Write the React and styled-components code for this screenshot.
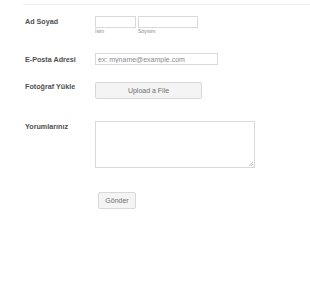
import React from 'react'
import styled, { createGlobalStyle } from 'styled-components'

const Global = createGlobalStyle`
  body {
    margin: 0;
    background: #fff;
    font-family: "Liberation Sans", Arial, sans-serif;
  }
`;

const Page = styled.div`
  padding: 4px 0 0 23px;
  height: 300px;
  box-sizing: border-box;
`;

const Form = styled.form`
  border-top: 1px solid #eeeeee;
  padding-left: 2px;
`;

const Row = styled.div`
  display: flex;
  align-items: flex-start;
  margin-top: ${(p) => p.$top}px;
`;

const Label = styled.label`
  width: 70px;
  flex-shrink: 0;
  font-size: 7.2px;
  font-weight: bold;
  line-height: 8px;
  color: #4f4f4f;
  padding-top: ${(p) => p.$pad ?? 2}px;
`;

const Field = styled.div`
  display: flex;
  flex-direction: column;
  padding-left: ${(p) => p.$indent || 0}px;
`;

const NameFields = styled.div`
  display: flex;
  gap: 2px;
`;

const NameCol = styled.div`
  display: flex;
  flex-direction: column;
`;

const TextInput = styled.input`
  box-sizing: border-box;
  width: ${(p) => p.$w}px;
  height: 12px;
  margin: 0;
  padding: 0 2px;
  border: 1px solid #d9d9d9;
  border-radius: 0;
  font-family: inherit;
  font-size: 7px;
  color: #555;
  outline: none;
  &::placeholder {
    color: #8a8a8a;
  }
`;

const SubLabel = styled.span`
  font-size: 5px;
  line-height: 7px;
  color: #8a8a8a;
`;

const Button = styled.button`
  box-sizing: border-box;
  width: ${(p) => p.$w}px;
  height: 17px;
  margin: 0;
  padding: 0;
  background: #f4f4f4;
  border: 1px solid #d8d8d8;
  border-radius: 2px;
  font-family: inherit;
  font-size: 7px;
  color: #6f6f6f;
  cursor: pointer;
`;

const TextArea = styled.textarea`
  box-sizing: border-box;
  width: 160px;
  height: 47px;
  margin: 0;
  border: 1px solid #d9d9d9;
  border-radius: 0;
  font-family: inherit;
  font-size: 7px;
  display: block;
  outline: none;
  resize: none;
  background: #fff
    linear-gradient(135deg, transparent 45%, #c4c4c4 45%, #c4c4c4 60%, transparent 60%, transparent 72%, #c4c4c4 72%, #c4c4c4 87%, transparent 87%)
    no-repeat right 1px bottom 1px / 4px 4px;
`;

export default function App() {
  return (
    <>
      <Global />
      <Page>
        <Form onSubmit={(e) => e.preventDefault()}>
          <Row $top={11}>
            <Label $pad={2}>Ad Soyad</Label>
            <NameFields>
              <NameCol>
                <TextInput $w={41} />
                <SubLabel>İsim</SubLabel>
              </NameCol>
              <NameCol>
                <TextInput $w={60} />
                <SubLabel>Soyisim</SubLabel>
              </NameCol>
            </NameFields>
          </Row>
          <Row $top={18}>
            <Label $pad={3}>E-Posta Adresi</Label>
            <TextInput $w={123} placeholder="ex: myname@example.com" />
          </Row>
          <Row $top={17}>
            <Label $pad={1}>Fotoğraf Yükle</Label>
            <Button type="button" $w={107}>Upload a File</Button>
          </Row>
          <Row $top={22}>
            <Label $pad={2}>Yorumlarınız</Label>
            <TextArea />
          </Row>
          <Row $top={24}>
            <Label />
            <Field $indent={3}>
              <Button type="submit" $w={38}>Gönder</Button>
            </Field>
          </Row>
        </Form>
      </Page>
    </>
  );
}
